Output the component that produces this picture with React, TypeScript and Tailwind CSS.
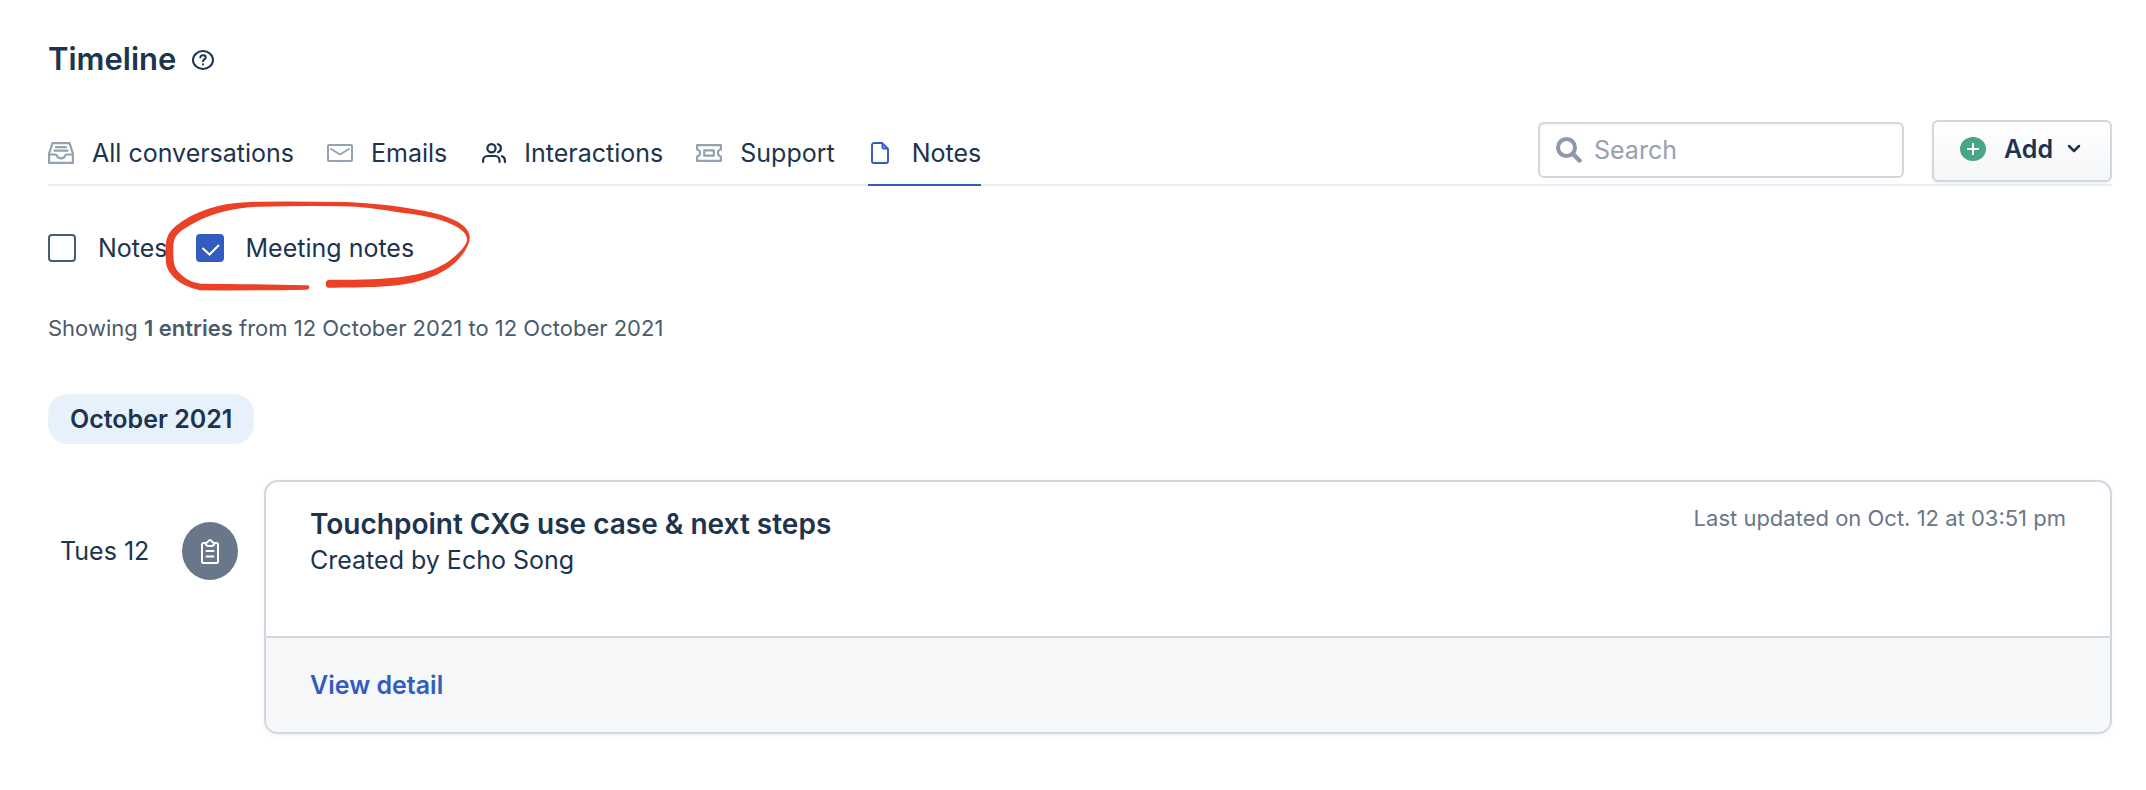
import React, { useState } from 'react';

type IconProps = { className?: string };

function InboxIcon({ className }: IconProps) {
  return (
    <svg viewBox="0 0 26 22" className={className} fill="none" stroke="currentColor" strokeWidth="2.2" strokeLinejoin="round" strokeLinecap="round">
      <path d="M1.100 11.500 4.500 1.100h17L24.900 11.500V20.900H1.100z" />
      <path d="M1 12.500h6.500c.8 0 1.200.5 1.400 1.200.5 1.700 2 2.600 4.100 2.600s3.600-.9 4.100-2.600c.2-.7.6-1.200 1.400-1.200H25M8 5.200h10M6.500 8.700h13" />
    </svg>
  );
}

function MailIcon({ className }: IconProps) {
  return (
    <svg viewBox="0 0 26 18" className={className} fill="none" stroke="currentColor" strokeWidth="2" strokeLinejoin="round" strokeLinecap="round">
      <rect x="1" y="1" width="24" height="16" rx="1" />
      <path d="m4 5 9 5.500L22 5" />
    </svg>
  );
}

function PeopleIcon({ className }: IconProps) {
  return (
    <svg viewBox="0 0 24 20" className={className} fill="none" stroke="currentColor" strokeWidth="2.2" strokeLinecap="round">
      <circle cx="9.500" cy="5.200" r="4.100" />
      <path d="M1.100 18.900v-1.400c0-2.800 2-4.500 4.500-4.500h7.400c2.500 0 4.500 1.700 4.500 4.500v1.400M16 1.200c1.800.6 2.900 2.100 2.900 4s-1.100 3.400-2.900 4M20 13.200c1.800.6 2.900 2.200 2.900 4.300v1.400" />
    </svg>
  );
}

function TicketIcon({ className }: IconProps) {
  return (
    <svg viewBox="0 0 26 18" className={className} fill="none" stroke="currentColor" strokeWidth="2.200" strokeLinejoin="round">
      <path d="M1.100 1.100h23.800v4.400c-2 .4-3 1.800-3 3.500s1 3.100 3 3.500v4.400H1.100v-4.400c2-.4 3-1.800 3-3.500s-1-3.100-3-3.500z" />
      <rect x="8.200" y="6.300" width="9.600" height="5.400" />
    </svg>
  );
}

function FileIcon({ className }: IconProps) {
  return (
    <svg viewBox="0 0 18 22" className={className} fill="none" stroke="currentColor" strokeWidth="1.900" strokeLinejoin="round">
      <path d="M11 1H3a2 2 0 0 0-2 2v16a2 2 0 0 0 2 2h12a2 2 0 0 0 2-2V7z" />
      <path d="M11.500 1v4.500a1 1 0 0 0 1 1H17" />
    </svg>
  );
}

function ClipboardIcon({ className }: IconProps) {
  return (
    <svg viewBox="0 0 18 25" className={className} fill="none" stroke="currentColor" strokeWidth="2" strokeLinejoin="round" strokeLinecap="round">
      <path d="M4.500 4H2.500A1.500 1.500 0 0 0 1 5.500v17A1.500 1.500 0 0 0 2.500 24h13a1.500 1.500 0 0 0 1.500-1.500v-17A1.500 1.500 0 0 0 15.500 4h-2" />
      <path d="M4.500 4.500C5.500 3.500 7 3 7.500 2c.6-1.300 2.400-1.300 3 0 .5 1 2 1.500 3 2.500-.5 1.500-1.500 2.500-3 2.500h-3c-1.500 0-2.500-1-3-2.500zM5.500 12h7M5.500 17.500h7" />
    </svg>
  );
}

const tabs = [
  { id: 'all', label: 'All conversations', icon: <InboxIcon className="w-[26px] h-[22px] text-[#94a1b1]" /> },
  { id: 'emails', label: 'Emails', icon: <MailIcon className="w-[26px] h-[18px] text-[#94a1b1]" /> },
  { id: 'interactions', label: 'Interactions', icon: <PeopleIcon className="w-6 h-5 ml-0.5 text-[#1c344d]" /> },
  { id: 'support', label: 'Support', icon: <TicketIcon className="w-[26px] h-[18px] text-[#94a1b1]" /> },
  { id: 'notes', label: 'Notes', icon: <FileIcon className="w-[18px] h-[22px] ml-[3px] text-[#335cc0]" /> },
];

type CheckProps = {
  label: string;
  checked: boolean;
  onChange: (value: boolean) => void;
};

function CheckOption({ label, checked, onChange }: CheckProps) {
  return (
    <label className="flex items-center gap-[22px] whitespace-nowrap">
      <span className="relative flex w-7 h-7">
        <input
          type="checkbox"
          checked={checked}
          onChange={(e) => onChange(e.target.checked)}
          className="appearance-none w-7 h-7 rounded border-2 border-[#4a5b6c] bg-white checked:border-[#335cc0] checked:bg-[#335cc0]"
        />
        {checked && (
          <svg viewBox="0 0 28 28" className="absolute inset-0 w-7 h-7 pointer-events-none" fill="none" stroke="white" strokeWidth="2">
            <path d="m6.500 14 7 6.500 9.500-9.500" />
          </svg>
        )}
      </span>
      {label}
    </label>
  );
}

export function App() {
  const [activeTab, setActiveTab] = useState('notes');
  const [showNotes, setShowNotes] = useState(false);
  const [showMeetings, setShowMeetings] = useState(true);
  const [query, setQuery] = useState('');

  return (
    <main className="min-h-screen bg-white pt-9 pl-12 pr-[34px] font-['Inter',sans-serif] text-[25px] leading-8 text-[#1c344d]">
      <header className="flex items-center gap-4">
        <h1 className="text-[31px] leading-[46px] font-semibold">Timeline</h1>
        <button type="button" aria-label="Help" className="mt-0.5">
          <svg viewBox="0 0 22 20" className="w-[22px] h-5" fill="none" stroke="currentColor" strokeWidth="2" strokeLinecap="round">
            <ellipse cx="11" cy="10" rx="10" ry="9" />
            <path d="M8.300 7.500C8.600 5.900 9.700 5.200 11 5.200c1.600 0 2.700 1 2.700 2.300 0 1.800-2.700 1.900-2.700 3.700M11 14.300v.2" />
          </svg>
        </button>
      </header>

      <div className="flex items-end justify-between mt-[38px] border-b-2 border-[#eaeef3]">
        <nav className="flex gap-[33px] -mb-0.5">
          {tabs.map((tab) => (
            <button
              key={tab.id}
              type="button"
              onClick={() => setActiveTab(tab.id)}
              className={
                activeTab === tab.id
                  ? 'flex items-center gap-4 pb-[15px] border-b-2 border-[#335cc0]'
                  : 'flex items-center gap-4 pb-[15px] border-b-2 border-transparent'
              }
            >
              <span className="flex w-7">{tab.icon}</span>
              {tab.label}
            </button>
          ))}
        </nav>

        <div className="flex items-center gap-7 pb-0.5">
          <label className="flex items-center gap-3 w-[366px] h-14 mb-0.5 pl-4 pr-3 rounded-md border-2 border-[#cfd7e0] bg-white shadow-[inset_0_2px_2px_rgba(0,0,0,0.03)]">
            <svg viewBox="0 0 26 26" className="w-[26px] h-[26px] shrink-0 text-[#8c99a8]" fill="none" stroke="currentColor" strokeLinecap="round">
              <circle cx="10.500" cy="10.500" r="8.500" strokeWidth="4" />
              <path d="m17.500 17.500 6 6" strokeWidth="4.500" />
            </svg>
            <input
              type="text"
              aria-label="Search"
              placeholder="Search"
              value={query}
              onChange={(e) => setQuery(e.target.value)}
              className="min-w-0 flex-1 outline-none placeholder:text-[#94a1b1]"
            />
          </label>
          <button
            type="button"
            className="flex items-center w-[180px] h-[62px] pl-[26px] pb-1 rounded-md border-2 border-[#cfd7e0] bg-linear-to-b from-white to-[#f4f6f8] font-semibold shadow-[0_2px_2px_rgba(0,0,0,0.04)]"
          >
            <svg viewBox="0 0 26 24" className="w-[26px] h-6" fill="none" stroke="white" strokeWidth="2">
              <ellipse cx="13" cy="12" rx="13" ry="12" fill="#48a586" stroke="none" />
              <path d="M13 6v12M7 12h12" />
            </svg>
            <span className="ml-[18px]">Add</span>
            <svg viewBox="0 0 14 10" className="w-3.5 h-2.5 ml-3.5" fill="none" stroke="currentColor" strokeWidth="2.500" strokeLinecap="round" strokeLinejoin="round">
              <path d="m2 2 5 5 5-5" />
            </svg>
          </button>
        </div>
      </div>

      <div className="relative flex items-center gap-7 mt-[46px]">
        <CheckOption label="Notes" checked={showNotes} onChange={setShowNotes} />
        <CheckOption label="Meeting notes" checked={showMeetings} onChange={setShowMeetings} />
        {/* hand-drawn ring round the active filter */}
        <svg viewBox="0 0 930 276" className="absolute left-[115px] -top-8 w-[310px] h-[92px] pointer-events-none" fill="#ec4126">
          <path d="M436 256Q442 262 436 268L430 269Q250 272 110 271Q60 260 35 235C8 205 8 195 8 160C6 105 20 90 60 62C130 18 200 6 290 5Q420 4 550 6C660 11 740 24 800 36C860 50 890 66 906 82C928 106 922 125 905 154C870 206 820 230 760 245C700 261 610 262 494 263Q488 261 488 252Q488 242 496 240C560 239 640 240 710 232C790 221 830 204 862 180C890 158 912 135 912 118C912 98 890 82 850 66C800 48 760 44 700 36C640 27 600 20 540 19Q420 17 290 20C210 22 140 44 95 68C48 94 32 105 31 140C30 190 33 202 50 220C70 240 90 248 112 251Q250 252 430 256Z" />
        </svg>
      </div>

      <p className="mt-12 text-[22px] text-[#4a5b6c]">
        Showing <strong className="font-semibold">1 entries</strong> from 12 October 2021 to 12 October 2021
      </p>

      <h2 className="w-fit mt-[50px] px-[22px] py-[9px] rounded-[20px] bg-[#e7f1fc] font-semibold">October 2021</h2>

      <section className="flex items-start mt-9">
        <div className="flex items-center shrink-0 w-[216px] pl-3 pt-[42px]">
          <time dateTime="2021-10-12" className="w-[122px]">Tues 12</time>
          <span className="flex items-center justify-center w-14 h-[58px] rounded-[50%] bg-[#68788a] text-white">
            <ClipboardIcon className="w-[18px] h-[25px]" />
          </span>
        </div>
        <article className="flex-1 min-w-0 overflow-hidden rounded-[14px] border-2 border-[#cfd7e0] bg-white shadow-[0_2px_6px_rgba(0,0,0,0.06)]">
          <div className="flex items-start justify-between px-11 pt-6 pb-[58px]">
            <div>
              <h3 className="text-[28px] leading-9 font-semibold">Touchpoint CXG use case &amp; next steps</h3>
              <p className="leading-9">Created by Echo Song</p>
            </div>
            <p className="text-[22px] leading-6 text-[#68788a]">Last updated on Oct. 12 at 03:51 pm</p>
          </div>
          <footer className="px-11 py-[31px] border-t-2 border-[#cfd7e0] bg-[#f5f7f9]">
            <a href="#detail" className="font-semibold text-[#335cc0]">View detail</a>
          </footer>
        </article>
      </section>
    </main>
  );
}

export default App;
